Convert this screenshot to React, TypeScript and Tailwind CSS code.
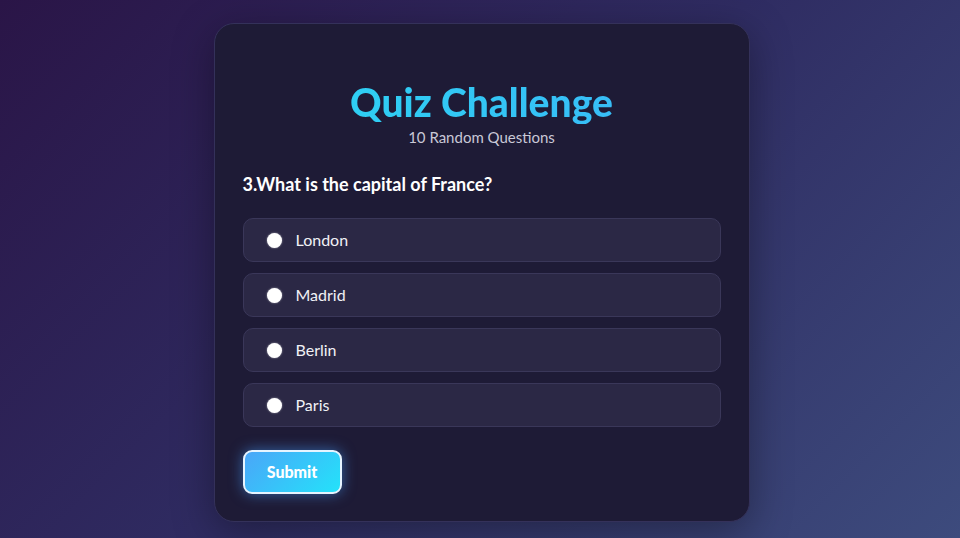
const OPTIONS = ['London', 'Madrid', 'Berlin', 'Paris']

function OptionRow({ label }: { label: string }) {
  return (
    <label className="flex h-[44px] cursor-pointer items-center gap-[14px] rounded-[10px] border border-[#3a3759] bg-[#2b2845] pl-[23px]">
      <span className="h-[15px] w-[15px] rounded-full bg-white shadow-[0_0_2px_rgba(255,255,255,0.6)]" />
      <span className="text-[16px] text-[#f1f1f5]">{label}</span>
    </label>
  )
}

export default function App() {
  return (
    <div
      className="flex h-[538px] w-full items-start justify-center bg-[linear-gradient(135deg,#2a1547_0%,#2f2c62_50%,#3d4b7d_100%)] pt-[23px] pl-[3px]"
      style={{ fontFamily: 'Lato, "Noto Sans", sans-serif' }}
    >
      <div className="flex h-[499px] w-[536px] flex-col rounded-[20px] border border-[#34315a] bg-[#1e1b36] px-[28px] pt-[56px] shadow-[0_10px_40px_rgba(0,0,0,0.35)]">
        <h1 className="bg-[linear-gradient(90deg,#2bd6f2,#3bb6f8)] bg-clip-text text-center text-[39px] leading-[44px] font-black text-transparent">
          Quiz Challenge
        </h1>
        <p className="mt-[4px] text-center text-[15px] leading-[18px] text-[#c9c8d6]">10 Random Questions</p>

        <h2 className="mt-[27px] text-[18px] leading-[22px] font-bold text-white">3.What is the capital of France?</h2>

        <div className="mt-[23px] flex flex-col gap-[11px]">
          {OPTIONS.map((o) => (
            <OptionRow key={o} label={o} />
          ))}
        </div>

        <div className="mt-[23px]">
          <button
            type="button"
            className="h-[44px] w-[99px] rounded-[9px] border-2 border-[#e6f4ff] bg-[linear-gradient(135deg,#4aa6f8,#24e2fa)] text-[16px] font-black text-white shadow-[0_0_14px_rgba(70,160,255,0.55)]"
          >
            Submit
          </button>
        </div>
      </div>
    </div>
  )
}
